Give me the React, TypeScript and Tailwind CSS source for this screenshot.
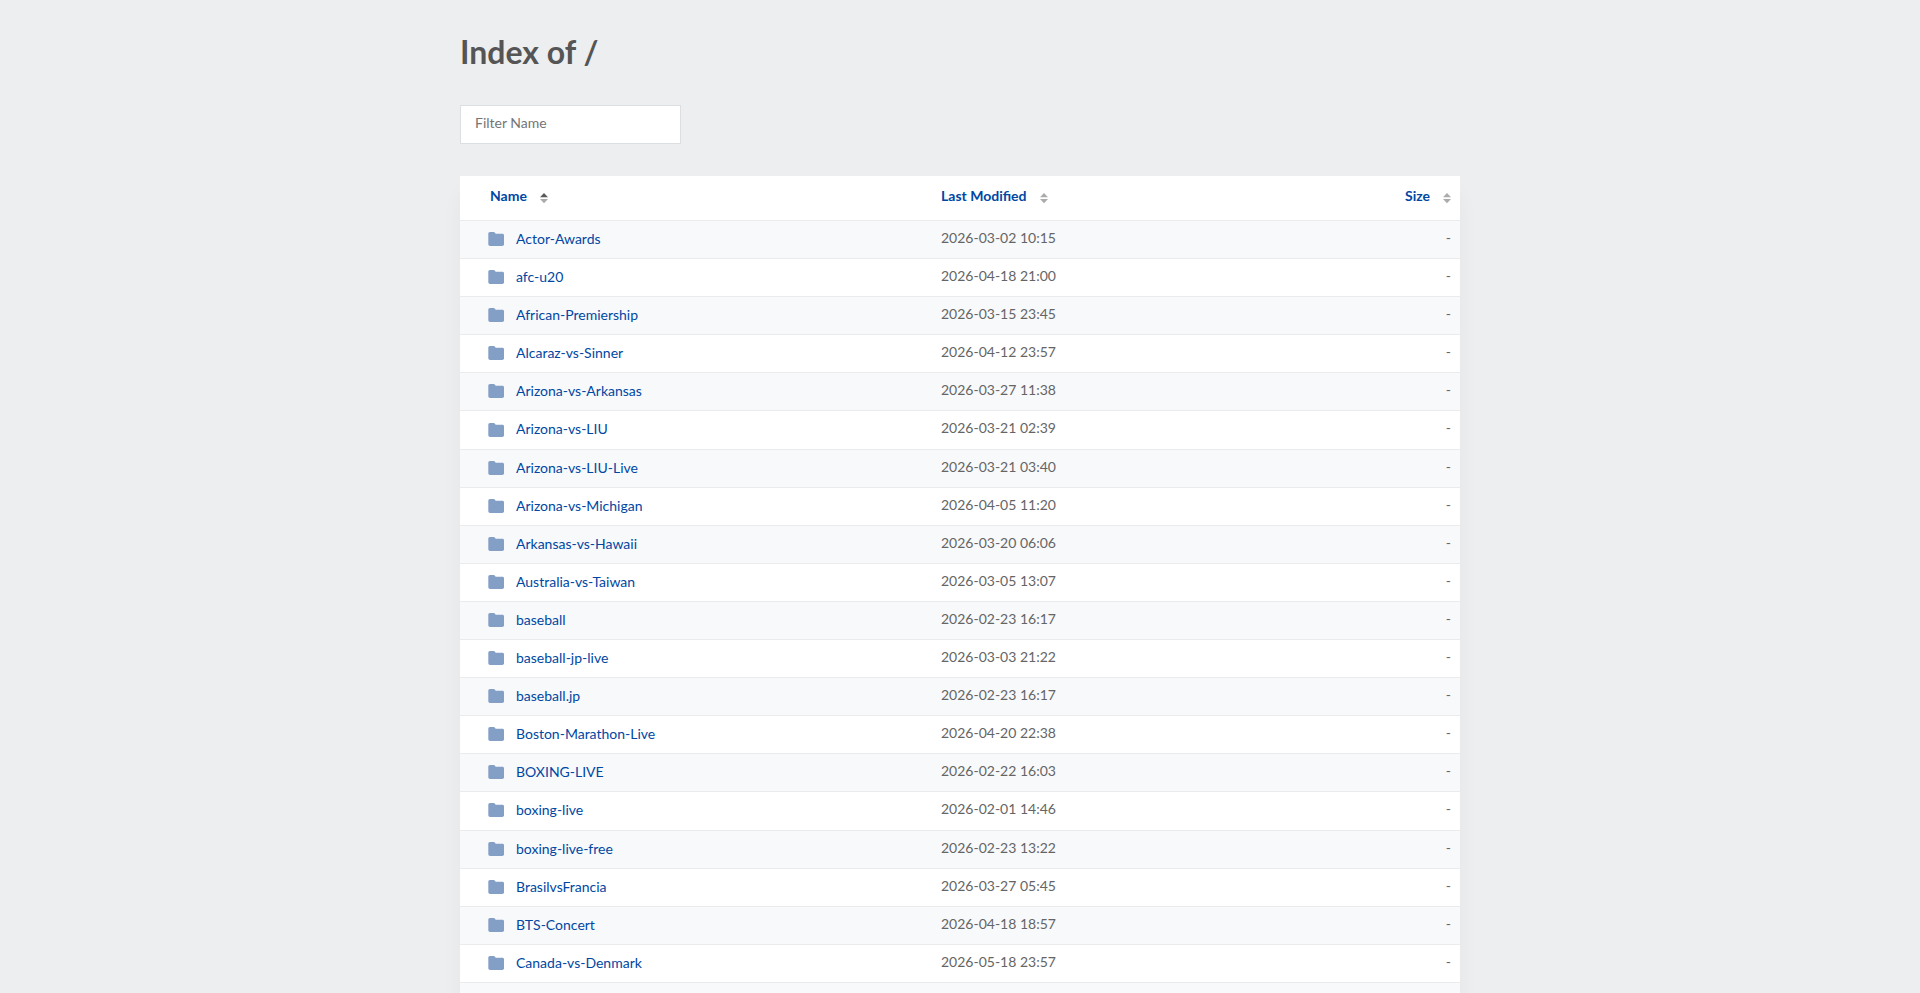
import React from "react";

interface Entry {
  name: string;
  modified: string;
}

const entries: Entry[] = [
  { name: "Actor-Awards", modified: "2026-03-02 10:15" },
  { name: "afc-u20", modified: "2026-04-18 21:00" },
  { name: "African-Premiership", modified: "2026-03-15 23:45" },
  { name: "Alcaraz-vs-Sinner", modified: "2026-04-12 23:57" },
  { name: "Arizona-vs-Arkansas", modified: "2026-03-27 11:38" },
  { name: "Arizona-vs-LIU", modified: "2026-03-21 02:39" },
  { name: "Arizona-vs-LIU-Live", modified: "2026-03-21 03:40" },
  { name: "Arizona-vs-Michigan", modified: "2026-04-05 11:20" },
  { name: "Arkansas-vs-Hawaii", modified: "2026-03-20 06:06" },
  { name: "Australia-vs-Taiwan", modified: "2026-03-05 13:07" },
  { name: "baseball", modified: "2026-02-23 16:17" },
  { name: "baseball-jp-live", modified: "2026-03-03 21:22" },
  { name: "baseball.jp", modified: "2026-02-23 16:17" },
  { name: "Boston-Marathon-Live", modified: "2026-04-20 22:38" },
  { name: "BOXING-LIVE", modified: "2026-02-22 16:03" },
  { name: "boxing-live", modified: "2026-02-01 14:46" },
  { name: "boxing-live-free", modified: "2026-02-23 13:22" },
  { name: "BrasilvsFrancia", modified: "2026-03-27 05:45" },
  { name: "BTS-Concert", modified: "2026-04-18 18:57" },
  { name: "Canada-vs-Denmark", modified: "2026-05-18 23:57" },
];

function FolderIcon() {
  return (
    <svg className="h-4 w-4 shrink-0" viewBox="0 0 16 16" fill="#839fc6" aria-hidden="true">
      <path d="M.3 2.900C.3 1.800 1 1.100 2 1.100h3.600c1 0 1.500.9 2 1.700h6.700c1.100 0 1.800.7 1.800 1.800v8.400c0 1.200-.7 1.900-1.900 1.900H2.200C1 14.900.3 14.200.3 13z" />
    </svg>
  );
}

function SortIcon({ active }: { active?: boolean }) {
  return (
    <svg className="h-3 w-2" viewBox="0 0 8 12" aria-hidden="true">
      <path d="M4 1l4 4.200H0z" fill={active ? "#5a5a5a" : "#ababab"} />
      <path d="M0 7h8l-4 4.200z" fill="#ababab" />
    </svg>
  );
}

interface HeaderLinkProps {
  label: string;
  active?: boolean;
}

function HeaderLink({ label, active }: HeaderLinkProps) {
  return (
    <a href="#" className="inline-flex gap-[13px] font-bold text-[#0047a3]">
      {label}
      <span className="pt-1">
        <SortIcon active={active} />
      </span>
    </a>
  );
}

export default function App() {
  return (
    <div className="h-screen overflow-hidden bg-[#edeef0] font-[Lato,sans-serif] text-sm leading-[1.15] text-[#656565]">
      <main className="mx-auto max-w-[1000px]">
        <h1 className="pt-8 text-[32px] leading-10 font-bold text-[#555]">Index of /</h1>
        <input
          type="text"
          aria-label="Filter Name"
          placeholder="Filter Name"
          className="mt-[33px] block h-[39px] w-[221px] border border-[#dcdfe2] bg-white px-[14px] pb-1 placeholder:text-[#757575]"
        />
        <table className="mt-8 w-full table-fixed border-separate border-spacing-0 bg-white shadow-[0_16px_20px_rgba(0,0,0,0.04)]">
          <thead>
            <tr className="h-[45px] text-left [&>th]:border-b [&>th]:border-[#e9ebed] [&>th]:pt-3 [&>th]:align-top">
              <th className="w-[45%] pl-[30px]">
                <HeaderLink label="Name" active />
              </th>
              <th className="w-[35%] pl-[31px]">
                <HeaderLink label="Last Modified" />
              </th>
              <th className="w-[20%] pr-[9px] text-right">
                <HeaderLink label="Size" />
              </th>
            </tr>
          </thead>
          <tbody>
            {entries.map((entry) => (
              <tr
                key={entry.name}
                className="odd:bg-[#f8f9fb] [&>td]:border-b [&>td]:border-[#e9ebed] [&>td]:align-top"
              >
                <td className="pt-[10px] pb-[11px] pl-7">
                  <a href="#" className="flex items-center gap-3 text-[#0047a3]">
                    <FolderIcon />
                    {entry.name}
                  </a>
                </td>
                <td className="pt-[9px] pl-[31px]">{entry.modified}</td>
                <td className="pt-[9px] pr-[9px] text-right">-</td>
              </tr>
            ))}
            <tr className="h-10 bg-[#f8f9fb]">
              <td colSpan={3} />
            </tr>
          </tbody>
        </table>
      </main>
    </div>
  );
}
